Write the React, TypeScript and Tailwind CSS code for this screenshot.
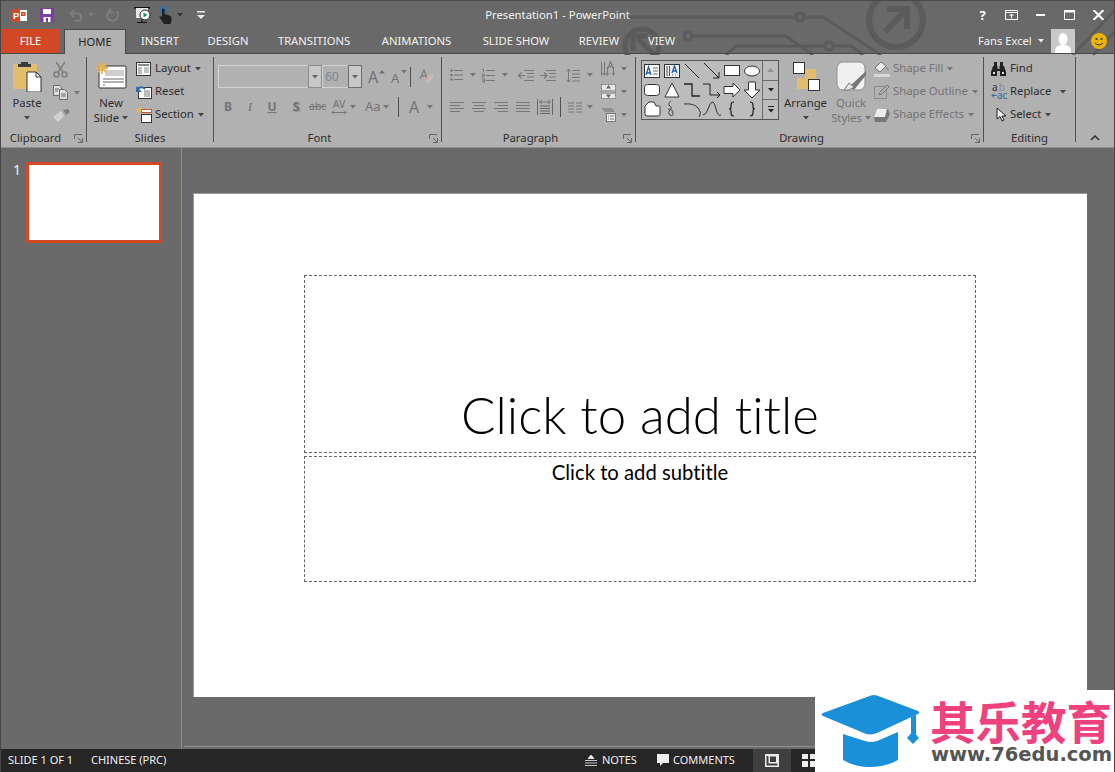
import React from "react";

const Caret = ({className = "text-[#444]"}: {className?: string}) => (
  <svg width="6" height="4" viewBox="0 0 6 4" className={`shrink-0 ${className}`}>
    <path d="M0 0h6L3 3.500z" fill="currentColor" />
  </svg>
);

const Launcher = () => (
  <svg width="9" height="9" viewBox="0 0 9 9" className="absolute right-[3px] bottom-[-1px] text-[#666]">
    <path d="M.5 5V.5H8M8.500 8.500H4M8.500 8.500V4M8 8 4 4" fill="none" stroke="currentColor" />
  </svg>
);

const Group = ({label, className, launcher, children}: {label: string; className: string; launcher?: boolean; children: React.ReactNode}) => (
  <div className={`relative flex flex-col border-r border-[#4f4f4f] ${className}`}>
    <div className="flex h-[77px]">{children}</div>
    <div className={`h-[9px] leading-[9px] text-center text-[#2e2e2e] ${launcher ? "pr-[16px]" : ""}`}>{label}</div>
    {launcher && <Launcher />}
  </div>
);

const BigButton = ({className, icon, lines, caret, dim}: {className: string; icon: React.ReactNode; lines: string[]; caret?: boolean; dim?: boolean}) => (
  <div className={`flex flex-col items-center shrink-0 ${dim ? "text-[#747474]" : "text-[#2e2e2e]"} ${className}`}>
    <div className="h-[38px] flex items-center justify-center">{icon}</div>
    {lines.map((l, i) => (
      <div key={l} className="h-[15px] leading-[15px] flex items-center gap-[3px] whitespace-nowrap">
        {l}
        {caret && i === lines.length - 1 && <Caret className={dim ? "text-[#747474]" : "text-[#444]"} />}
      </div>
    ))}
    {lines.length === 1 && (
      <div className="h-[15px] flex items-center">
        <Caret />
      </div>
    )}
  </div>
);

const SmallRow = ({icon, label, caret, dim, iconBox = "w-[19px]", caretGap = "ml-[4px]"}: {icon: React.ReactNode; label: string; caret?: boolean; dim?: boolean; iconBox?: string; caretGap?: string}) => (
  <div className={`h-[23px] flex items-center whitespace-nowrap ${dim ? "text-[#747474]" : "text-[#2e2e2e]"}`}>
    <div className={`shrink-0 flex items-center justify-start ${iconBox}`}>{icon}</div>
    {label}
    {caret && <div className={caretGap}><Caret className={dim ? "text-[#747474]" : "text-[#444]"} /></div>}
  </div>
);

// ---- title bar art
const CircuitArt = () => (
  <svg width="1115" height="54" viewBox="0 0 1115 54" className="absolute inset-0 text-[#5b5b5b]">
    <g fill="none" stroke="currentColor" strokeWidth="3">
      <path d="M620 16h175M803 16h19l58 38" />
      <circle cx="799" cy="16" r="4" />
      <path d="M691 35h94l27 19" />
      <circle cx="687" cy="35" r="4" />
      <path d="M725 54l10-9h89M832 45h18l12 9" />
      <circle cx="828" cy="45" r="4" />
      <path d="M1072 54l42-45M1092 54l22-24" />
    </g>
    <g fill="none" stroke="currentColor">
      <circle cx="895" cy="19" r="27" strokeWidth="6" />
      <path d="M884 31l20-21M886 8h20v20" strokeWidth="6" />
      <circle cx="641" cy="45" r="17" strokeWidth="5" />
      <path d="M653 54l-16-16M632 50V35h15" strokeWidth="5" />
    </g>
  </svg>
);

const PowerPointLogo = () => (
  <svg width="16" height="15" viewBox="0 0 16 15">
    <path d="M0 2 9 0v15L0 13z" fill="#d24726" />
    <rect x="9" y="2" width="7" height="11" fill="#fff" />
    <path d="M10 4h4.500v4h-4.500z" fill="#d24726" />
    <path d="M11.500 5.500h1.500v1h-1.500zM10 9.500h4.500v1h-4.500z" fill="#fff" />
    <text x="2" y="11" fontSize="9.500" fontWeight="700" fill="#fff" fontFamily="Liberation Sans">P</text>
  </svg>
);

const SaveIcon = () => (
  <svg width="14" height="14" viewBox="0 0 14 14">
    <rect width="14" height="14" fill="#7b3fa0" />
    <rect x="3" y="1" width="8" height="5" fill="#fff" />
    <rect x="3.500" y="9" width="7" height="5" fill="#fff" />
    <rect x="6" y="10" width="2" height="4" fill="#7b3fa0" />
  </svg>
);

const UndoIcon = () => (
  <svg width="14" height="13" viewBox="0 0 14 13" fill="none" stroke="#7d7d7d" strokeWidth="2">
    <path d="M5 1 1.500 4.500 5 8M2 4.500h7a3.800 3.800 0 0 1 0 7.500H6" />
  </svg>
);

const RedoIcon = () => (
  <svg width="14" height="14" viewBox="0 0 14 14" fill="none" stroke="#7d7d7d" strokeWidth="2">
    <path d="M4 2.500a5.500 5.500 0 1 0 6.500 1M4 .5v4h4" />
  </svg>
);

const PresentIcon = () => (
  <svg width="17" height="18" viewBox="0 0 17 18">
    <path d="M0 1h16v1.500H0zM3 16h10v1H3zM7.500 13h1v3h-1z" fill="#111" />
    <rect x="2" y="2" width="12" height="10" fill="#e8e8e8" />
    <circle cx="11" cy="9" r="5" fill="#fff" stroke="#222" />
    <path d="M9.500 6.500 13.500 9l-4 2.500z" fill="#1d8a6d" />
  </svg>
);

const TouchIcon = () => (
  <svg width="15" height="18" viewBox="0 0 15 18">
    <circle cx="5" cy="4" r="4" fill="#3c6fa8" />
    <path d="M4 3.500a1.300 1.300 0 0 1 2.500 0V8l5 1.500q2 .8 2 2.500v3l-1 3H6L1.500 11.500q-.5-1.500 1-1.500L4 11z" fill="#222" />
  </svg>
);

const CustomizeIcon = () => (
  <svg width="8" height="8" viewBox="0 0 8 8" fill="#eee">
    <rect x="0" y="0" width="8" height="1.500" />
    <path d="M0 4h8L4 8z" />
  </svg>
);

// ---- clipboard / slides
const PasteIcon = () => (
  <svg width="30" height="31" viewBox="0 0 30 31">
    <rect x="1" y="3" width="24" height="25" rx="2" fill="#e3bd6e" />
    <path d="M9 3V1h7v2h3v3H6V3z" fill="#3b3b3b" />
    <path d="M15 11h9l5 5v15H15z" fill="#fff" stroke="#333" />
    <path d="M24 11v5h5" fill="none" stroke="#333" />
  </svg>
);

const CutIcon = () => (
  <svg width="15" height="16" viewBox="0 0 15 16" fill="none" stroke="#7d7d7d" strokeWidth="1.500">
    <circle cx="3.500" cy="12.500" r="2.500" />
    <circle cx="11.500" cy="12.500" r="2.500" />
    <path d="M10 10 3 0M5 10l7-10" />
  </svg>
);

const CopyIcon = () => (
  <svg width="15" height="15" viewBox="0 0 15 15" fill="#ddd" stroke="#6b6b6b">
    <path d="M.5.500h6l2 2v8H.5z" />
    <path d="M6.500 4.500h5l3 3v7h-8z" />
    <path d="M2 4h4M2 6h3M8 9h5M8 11h5" fill="none" />
  </svg>
);

const PainterIcon = () => (
  <svg width="17" height="13" viewBox="0 0 17 13">
    <path d="M0 8 8 2l3 5-6 6z" fill="#d2d2d2" />
    <path d="M10 1l5-1 2 3-4 3z" fill="#7d7d7d" />
  </svg>
);

const NewSlideIcon = () => (
  <svg width="31" height="29" viewBox="0 0 31 29">
    <rect x="3" y="4" width="27" height="22" rx="1" fill="#fff" stroke="#333" />
    <rect x="9" y="8" width="19" height="6" fill="#cfcfcf" />
    <path d="M7 17h21M7 20h21M7 23h2" stroke="#666" />
    <path d="M6 0v12M0 6h12M2 2l8 8M10 2l-8 8" stroke="#e7b455" strokeWidth="1.800" />
    <circle cx="6" cy="6" r="3" fill="#e7b455" />
  </svg>
);

const LayoutIcon = () => (
  <svg width="15" height="14" viewBox="0 0 15 14">
    <rect x=".5" y=".5" width="14" height="13" fill="#fff" stroke="#333" />
    <rect x="2" y="2" width="11" height="2" fill="#888" />
    <rect x="2" y="5" width="4" height="7" fill="#bbb" />
    <path d="M8 6h5M8 8h5M8 10h5" stroke="#888" />
  </svg>
);

const ResetIcon = () => (
  <svg width="16" height="14" viewBox="0 0 16 14">
    <rect x="2.500" y="2.500" width="13" height="11" fill="#fff" stroke="#333" />
    <rect x="8" y="5" width="6" height="7" fill="#bbb" />
    <path d="M1 5q4-5 8-1" fill="none" stroke="#2f6ca8" strokeWidth="2" />
    <path d="M0 1v6h6z" fill="#2f6ca8" />
  </svg>
);

const SectionIcon = () => (
  <svg width="16" height="16" viewBox="0 0 16 16">
    <rect x="5.500" y="7.500" width="10" height="8" fill="#fff" stroke="#333" />
    <rect x="5.500" y="2.500" width="10" height="3" fill="#fff" stroke="#c8552c" />
    <path d="M3 0v6M0 3h6M1 1l4 4M5 1 1 5" stroke="#e7b455" strokeWidth="1.200" />
  </svg>
);

// ---- font group
const GrowIcon = ({up}: {up?: boolean}) => (
  <div className="relative w-[14px] h-[16px] text-[#747474]">
    <span className={`absolute left-0 bottom-0 leading-none ${up ? "text-[16px]" : "text-[13px]"}`}>A</span>
    <svg width="6" height="4" viewBox="0 0 6 4" className={`absolute top-[1px] ${up ? "right-[-3px]" : "right-[-2px]"}`}>
      <path d={up ? "M0 3.500h6L3 0z" : "M0 0h6L3 3.500z"} fill="currentColor" />
    </svg>
  </div>
);

const EraserIcon = () => (
  <svg width="15" height="16" viewBox="0 0 15 16">
    <path d="M7 12 13 5l2 2-5 7H7z" fill="#c0c0c0" />
    <path d="M1 10 5 1l3 8M2.500 7h4" fill="none" stroke="#808080" strokeWidth="1.300" />
    <path d="M6 9l4-4 3 2-4 5z" fill="#d8a9a9" opacity=".6" />
  </svg>
);

// ---- paragraph group
const Lines = ({kind}: {kind: "left" | "center" | "right" | "justify"}) => {
  const d = {
    left: "M0 1.500h14M0 4.500h10M0 7.500h14M0 10.500h10",
    center: "M0 1.500h14M2 4.500h10M0 7.500h14M2 10.500h10",
    right: "M0 1.500h14M4 4.500h10M0 7.500h14M4 10.500h10",
    justify: "M0 1.500h14M0 4.500h14M0 7.500h14M0 10.500h14",
  }[kind];
  return (
    <svg width="14" height="12" viewBox="0 0 14 12">
      <path d={d} stroke="#777" fill="none" />
    </svg>
  );
};

const BulletsIcon = () => (
  <svg width="13" height="14" viewBox="0 0 13 14">
    <path d="M4 2.500h9M4 7h9M4 11.500h9" stroke="#777" />
    <circle cx="1.500" cy="2.500" r="1.200" fill="#777" />
    <circle cx="1.500" cy="7" r="1.200" fill="#777" />
    <circle cx="1.500" cy="11.500" r="1.200" fill="#777" />
  </svg>
);

const NumberingIcon = () => (
  <svg width="14" height="15" viewBox="0 0 14 15">
    <path d="M5 2.500h9M5 7.500h9M5 12.500h9" stroke="#777" />
    <path d="M1 1h1.500v3M1 6h2.500v1.500H1V9h2.500M1 11h2.500v3H1M1.500 12.500h2" fill="none" stroke="#777" strokeWidth=".9" />
  </svg>
);

const IndentIcon = ({out}: {out?: boolean}) => (
  <svg width="16" height="11" viewBox="0 0 16 11">
    <path d="M6 .5h10M9 3.500h7M9 7h7M6 10.500h10" stroke="#777" />
    {out ? <path d="M0 5.500h7M3.500 2.500l-3 3 3 3" fill="none" stroke="#777" strokeWidth="1.200" /> : <path d="M0 5.500h7M4 2.500l3 3-3 3" fill="none" stroke="#777" strokeWidth="1.200" />}
  </svg>
);

const LineSpacingIcon = () => (
  <svg width="14" height="15" viewBox="0 0 14 15">
    <path d="M6 2.500h8M6 6h8M6 9.500h8M6 13h8" stroke="#777" />
    <path d="M2.500 1v13M.5 3.500l2-2.500 2 2.500M.5 11.500l2 2.500 2-2.500" fill="none" stroke="#777" />
  </svg>
);

const DistributeIcon = () => (
  <svg width="16" height="16" viewBox="0 0 16 16">
    <path d="M.5 0v16M15.500 0v16M3 7h10M3 9.500h10M3 12h10M3 14.500h10" stroke="#666" />
    <path d="M2.500 3h11M5 1 2.500 3 5 5M11 1l2.500 2L11 5" fill="none" stroke="#777" />
  </svg>
);

const ColumnsIcon = () => (
  <svg width="14" height="11" viewBox="0 0 14 11">
    <path d="M0 1h6M8 1h6M0 4h6M8 4h6M0 7h6M8 7h6M0 10h6M8 10h6" stroke="#777" />
  </svg>
);

const TextDirIcon = () => (
  <svg width="15" height="16" viewBox="0 0 15 16" fill="none" stroke="#777">
    <path d="M.5 1v13M3.500 1v13M6.500 6v8M12.500 6v8M-.5 12l1 2.500 1-2.500M2.500 12l1 2.500 1-2.500M5.500 12l1 2.500 1-2.500M11.500 12l1 2.500 1-2.500" />
    <path d="M7 7.500 9.500.5 12 7.500M8 5.500h3" strokeWidth="1.100" />
  </svg>
);

const AlignTextIcon = () => (
  <svg width="15" height="15" viewBox="0 0 15 15">
    <rect x=".5" y=".5" width="14" height="14" fill="#e8e8e8" stroke="#777" strokeDasharray="2 1" />
    <path d="M1 7h13M1 9h13" stroke="#666" />
    <path d="M7.500 1 5 4.500h5zM7.500 14 5 10.500h5z" fill="#666" />
  </svg>
);

const SmartArtIcon = () => (
  <svg width="15" height="15" viewBox="0 0 15 15">
    <path d="M0 1h11l3 4H4z" fill="#8f8f8f" />
    <rect x="5.500" y="6.500" width="9" height="8" fill="#eee" stroke="#777" />
    <path d="M7 9h1M9 9h4M7 12h1M9 12h4" stroke="#777" />
  </svg>
);

// ---- drawing group
const S = ({children}: {children: React.ReactNode}) => (
  <svg width="18" height="18" viewBox="0 0 18 18" fill="none" stroke="#222" strokeWidth="1">
    {children}
  </svg>
);

const shapes: React.ReactNode[] = [
  <S><rect x="1.500" y="2.500" width="15" height="13" fill="#fff" stroke="#333" /><path d="M3 13l2.500-8L8 13M3.800 11h3.500" stroke="#1e5fa8" strokeWidth="1.300" /><path d="M10 6h5M10 9h5M10 12h5" stroke="#666" /></S>,
  <S><rect x="1.500" y="2.500" width="15" height="13" fill="#eee" stroke="#333" /><path d="M4 4v10M6.500 4v10" stroke="#555" /><path d="M9 11l2.500-7L14 11M10 9h3" stroke="#1e5fa8" strokeWidth="1.300" /><path d="M9 13h1M12 13h1" stroke="#666" /></S>,
  <S><path d="M2 2l14 14" /></S>,
  <S><path d="M1 1l15 15M16 10v6h-6" /></S>,
  <S><rect x="1.500" y="3.500" width="15" height="10" fill="#fff" stroke="#333" /></S>,
  <S><ellipse cx="9" cy="9" rx="7.500" ry="5" fill="#fff" stroke="#333" /></S>,
  <S><rect x="1.500" y="3.500" width="15" height="11" rx="3" fill="#fff" stroke="#333" /></S>,
  <S><path d="M9 2l7 14H2z" fill="#fff" stroke="#333" /></S>,
  <S><path d="M1 3h8v12h8" strokeWidth="1.300" /></S>,
  <S><path d="M0 3h7v11h10M14 11l3 3-3 3" /></S>,
  <S><path d="M1 5.500h9V2l7 7-7 7v-3.500H1z" fill="#fff" stroke="#333" /></S>,
  <S><path d="M5.500 1h7v8H17l-8 8-8-8h4.500z" fill="#fff" stroke="#333" /></S>,
  <S><path d="M2 6l4-4h5l2 4h3q1 0 1 1v7q0 2-2 2H4q-2 0-2-2z" fill="#fff" stroke="#333" /></S>,
  <S><path d="M8 1Q4 4 7 6t0 4q-3 3 0 5t3-2-5-4" stroke="#444" /></S>,
  <S><path d="M1 4q10-1 14 4t1 9" stroke="#333" /></S>,
  <S><path d="M0 15q3 0 5-6t4-7 4 7 5 6" stroke="#333" /></S>,
  <S><path d="M11 2Q8 2 8 5v2q0 2-2 2 2 0 2 2v2q0 3 3 3" strokeWidth="1.200" /></S>,
  <S><path d="M7 2q3 0 3 3v2q0 2 2 2-2 0-2 2v2q0 3-3 3" strokeWidth="1.200" /></S>,
];

const ArrangeIcon = () => (
  <svg width="28" height="31" viewBox="0 0 28 31">
    <rect x="13" y="8" width="11" height="14" fill="#e3bd6e" />
    <rect x="5" y="17" width="11" height="11" fill="#e3bd6e" />
    <rect x="1.500" y="1.500" width="11" height="11" fill="#fff" stroke="#333" />
    <rect x="16.500" y="18.500" width="11" height="11" fill="#fff" stroke="#333" />
  </svg>
);

const QuickStylesIcon = () => (
  <svg width="30" height="30" viewBox="0 0 30 30">
    <rect x="1" y="1" width="28" height="28" rx="6" fill="#f0f0f0" stroke="#909090" />
    <path d="M30 10 13 26l5 3 12-15z" fill="#777" />
    <path d="M13 22l5 4-5 3h-5z" fill="#e6e6e6" stroke="#777" />
  </svg>
);

const ShapeFillIcon = () => (
  <svg width="17" height="16" viewBox="0 0 17 16">
    <path d="M7 1 1 7l5 4 6-6z" fill="#ececec" stroke="#777" />
    <path d="M12 6q3 1 3 3.500-3-.5-3-3.500" fill="#8d8d8d" />
    <rect y="13" width="16" height="3" fill="#d7d7d7" />
  </svg>
);

const ShapeOutlineIcon = () => (
  <svg width="16" height="15" viewBox="0 0 16 15" fill="none">
    <rect x=".5" y="2.500" width="12" height="12" stroke="#8d8d8d" />
    <path d="M5 11l1-3 7-7 2 2-7 7z" fill="#b1b1b1" stroke="#777" />
  </svg>
);

const ShapeEffectsIcon = () => (
  <svg width="16" height="14" viewBox="0 0 16 14">
    <path d="M3 1h11l2 5-4 8H1l-1-5z" fill="#777" />
    <path d="M3 1h10l-2 8H0z" fill="#ececec" />
  </svg>
);

// ---- editing group
const FindIcon = () => (
  <svg width="15" height="14" viewBox="0 0 15 14" fill="#222">
    <path d="M3 0h3v4H3zM9 0h3v4H9zM2 4h4.500v3h2V4H13l2 6v4H9V9H6v5H0v-4z" />
    <rect x="2" y="10" width="2" height="2" fill="#ddd" />
    <rect x="11" y="10" width="2" height="2" fill="#ddd" />
  </svg>
);

const ReplaceIcon = () => (
  <div className="w-[16px] flex flex-col text-[10px]">
    <div className="h-[7px] flex leading-[7px] pl-px">
      <span className="text-[#333]">a</span>
      <span className="ml-px text-[#8a8a8a]">b</span>
    </div>
    <div className="h-[8px] flex items-center leading-[8px]">
      <svg width="6" height="5" viewBox="0 0 6 5" className="shrink-0">
        <path d="M6 2.500H1M3 .5l-2 2 2 2" fill="none" stroke="#2f6ca8" />
      </svg>
      <span className="text-[#2f6ca8]">ac</span>
    </div>
  </div>
);

const SelectIcon = () => (
  <svg width="11" height="15" viewBox="0 0 11 15">
    <path d="M1 1v11l3-2.500L6 14l2-1-2-4h4z" fill="#eee" stroke="#222" />
  </svg>
);

// ---- status
const NotesIcon = () => (
  <svg width="12" height="12" viewBox="0 0 12 12">
    <path d="M3 3.500 6 0l3 3.500zM0 5.500h12M0 8h12M0 10.500h12" fill="#eee" stroke="#eee" strokeWidth=".8" />
  </svg>
);

const CommentIcon = () => (
  <svg width="12" height="13" viewBox="0 0 12 13">
    <path d="M0 0h12v9H6l-3 3V9H0z" fill="#eee" />
  </svg>
);

const tabs = [
  {label: "INSERT", w: "w-[38px]"},
  {label: "DESIGN", w: "w-[40px]"},
  {label: "TRANSITIONS", w: "w-[74px]"},
  {label: "ANIMATIONS", w: "w-[73px]"},
  {label: "SLIDE SHOW", w: "w-[68px]"},
  {label: "REVIEW", w: "w-[40px]"},
  {label: "VIEW", w: "w-[27px]"},
];

export default function App() {
  return (
    <div className="relative w-[1115px] h-[772px] overflow-hidden flex flex-col bg-[#6a6a6a] border-x border-[#474747] font-['Noto_Sans',sans-serif] text-[11.3px]">
      {/* title bar + tabs */}
      <div className="relative h-[54px] shrink-0 bg-[#696969] text-[#f2f2f2] border-t border-[#4a4a4a]">
        <CircuitArt />
        <div className="relative grid grid-cols-[1fr_auto_1fr] items-center h-[28px]">
          <div className="flex items-center pl-[10px]">
            <PowerPointLogo />
            <div className="ml-[13px]"><SaveIcon /></div>
            <div className="ml-[15px]"><UndoIcon /></div>
            <div className="ml-[5px]"><Caret className="text-[#7d7d7d]" /></div>
            <div className="ml-[12px]"><RedoIcon /></div>
            <div className="ml-[14px]"><PresentIcon /></div>
            <div className="ml-[7px]"><TouchIcon /></div>
            <div className="ml-[4px]"><Caret className="text-[#333]" /></div>
            <div className="ml-[14px]"><CustomizeIcon /></div>
          </div>
          <div className="whitespace-nowrap text-[11.3px]">Presentation1 - PowerPoint</div>
          <div className="flex justify-end items-center text-white pr-[1px]">
            <div className="w-[29px] flex justify-center font-bold text-[13px] leading-none">?</div>
            <div className="w-[29px] flex justify-center">
              <svg width="13" height="10" viewBox="0 0 13 10" fill="none" stroke="#fff"><path d="M.5.5h12v9H.5zM.5 2.500h12M6.500 8.500V4M4.500 6l2-2 2 2" /></svg>
            </div>
            <div className="w-[29px] flex justify-center">
              <svg width="9" height="2" viewBox="0 0 9 2"><rect width="9" height="2" fill="#fff" /></svg>
            </div>
            <div className="w-[29px] flex justify-center">
              <svg width="11" height="10" viewBox="0 0 11 10" fill="none" stroke="#fff"><path d="M.5.5h10v9H.5z" /><path d="M0 1.500h11" strokeWidth="2" /></svg>
            </div>
            <div className="w-[29px] flex justify-center">
              <svg width="11" height="10" viewBox="0 0 11 10" stroke="#fff" strokeWidth="2"><path d="M.5 0l10 10M10.500 0l-10 10" /></svg>
            </div>
          </div>
        </div>
        <div className="relative flex items-stretch h-[25px] border-b border-[#4a4a4a] text-[11.2px]">
          <div className="w-[59px] bg-[#d24726] text-white flex items-center justify-center">FILE</div>
          <div className="w-[62px] ml-[4px] -mb-px bg-[#b1b1b1] text-[#262626] border-x border-t border-[#4a4a4a] flex items-center justify-center">HOME</div>
          <div className="flex items-center gap-[29px] ml-[15px]">
            {tabs.map((t) => (
              <div key={t.label} className={`${t.w} flex justify-center whitespace-nowrap`}>{t.label}</div>
            ))}
          </div>
          <div className="ml-auto flex items-center pr-[7px]">
            <span className="w-[54px] whitespace-nowrap">Fans Excel</span>
            <div className="ml-[6px]"><Caret className="text-[#eee]" /></div>
            <div className="ml-[7px] w-[24px] h-[24px] bg-[#c9c9c9] flex items-end justify-center">
              <svg width="16" height="20" viewBox="0 0 16 20" fill="#fff"><ellipse cx="8" cy="6" rx="4.500" ry="6" /><path d="M0 20v-3q0-3 5-5h6q5 2 5 5v3z" /></svg>
            </div>
            <div className="ml-[16px]">
              <svg width="16" height="16" viewBox="0 0 16 16"><circle cx="8" cy="8" r="8" fill="#eab308" /><circle cx="5.500" cy="6" r="1.100" fill="#333" /><circle cx="10.500" cy="6" r="1.100" fill="#333" /><path d="M4 10q4 4 8 0" fill="none" stroke="#333" /></svg>
            </div>
          </div>
        </div>
      </div>

      {/* ribbon */}
      <div className="h-[94px] shrink-0 flex pt-[3px] pb-[5px] bg-[#b1b1b1] border-b border-[#8c8c8c]">
        <Group label="Clipboard" className="w-[86px]" launcher>
          <BigButton className="w-[52px]" icon={<PasteIcon />} lines={["Paste"]} />
          <div className="flex flex-col pt-[1px]">
            <div className="h-[23px] flex items-center"><CutIcon /></div>
            <div className="h-[23px] flex items-center gap-[6px]"><CopyIcon /><Caret className="text-[#777]" /></div>
            <div className="h-[23px] flex items-center"><PainterIcon /></div>
          </div>
        </Group>

        <Group label="Slides" className="w-[127px]">
          <BigButton className="w-[48px]" icon={<NewSlideIcon />} lines={["New", "Slide"]} caret />
          <div className="flex flex-col ml-[1px]">
            <SmallRow icon={<LayoutIcon />} label="Layout" caret />
            <SmallRow icon={<ResetIcon />} label="Reset" />
            <SmallRow icon={<SectionIcon />} label="Section" caret />
          </div>
        </Group>

        <Group label="Font" className="w-[228px]" launcher>
          <div className="flex flex-col pt-[8px] pl-[4px] text-[#747474]">
            <div className="h-[23px] flex items-center">
              <div className="w-[104px] h-full flex">
                <div className="flex-1 border-y border-l border-[#d2d2d2]" />
                <div className="w-[14px] bg-[#c8c8c8] border border-[#8c8c8c] flex items-center justify-center"><Caret className="text-[#666]" /></div>
              </div>
              <div className="w-[40px] h-full flex">
                <div className="flex-1 border-y border-l border-[#d2d2d2] pl-[2px] leading-[21px] text-[#7a8794] text-[12px]">60</div>
                <div className="w-[14px] bg-[#c8c8c8] border border-[#6e6e6e] flex items-center justify-center"><Caret className="text-[#666]" /></div>
              </div>
              <div className="ml-[6px]"><GrowIcon up /></div>
              <div className="ml-[9px]"><GrowIcon /></div>
              <div className="ml-[5px] w-px h-[20px] bg-[#4f4f4f]" />
              <div className="ml-[8px]"><EraserIcon /></div>
            </div>
            <div className="h-[22px] mt-[8px] flex items-center text-[12px] font-bold">
              <span className="ml-[4px] w-[12px] text-center">B</span>
              <span className="ml-[10px] w-[12px] text-center font-normal italic font-['Liberation_Serif',serif] text-[13px]">I</span>
              <span className="ml-[10px] w-[12px] text-center underline">U</span>
              <span className="ml-[11px] w-[14px] text-center text-[13px] [text-shadow:1px_1px_1px_#8a8a8a]">S</span>
              <span className="ml-[6px] w-[16px] text-center font-normal line-through text-[10.5px]">abc</span>
              <div className="ml-[6px] w-[16px] flex flex-col items-center font-normal text-[10.5px] leading-[11px]">
                AV
                <svg width="16" height="5" viewBox="0 0 16 5" fill="none" stroke="currentColor"><path d="M1 2.500h14M3 .5l-2 2 2 2M13 .5l2 2-2 2" /></svg>
              </div>
              <div className="ml-[3px]"><Caret className="text-[#747474]" /></div>
              <span className="ml-[9px] w-[15px] text-center font-normal text-[13px]">Aa</span>
              <div className="ml-[3px]"><Caret className="text-[#747474]" /></div>
              <div className="ml-[9px] w-px h-[20px] bg-[#4f4f4f]" />
              <span className="ml-[8px] w-[14px] text-center font-normal text-[16px]">A</span>
              <div className="ml-[6px]"><Caret className="text-[#747474]" /></div>
            </div>
          </div>
        </Group>

        <Group label="Paragraph" className="w-[194px]" launcher>
          <div className="w-[159px] flex flex-col pl-[8px]">
            <div className="h-[22px] mt-[7px] flex items-center">
              <BulletsIcon />
              <div className="ml-[7px]"><Caret className="text-[#747474]" /></div>
              <div className="ml-[5px]"><NumberingIcon /></div>
              <div className="ml-[7px]"><Caret className="text-[#747474]" /></div>
              <div className="ml-[10px]"><IndentIcon out /></div>
              <div className="ml-[6px]"><IndentIcon /></div>
              <div className="ml-[10px]"><LineSpacingIcon /></div>
              <div className="ml-[7px]"><Caret className="text-[#747474]" /></div>
            </div>
            <div className="h-[22px] mt-[10px] flex items-center">
              <Lines kind="left" />
              <div className="ml-[8px]"><Lines kind="center" /></div>
              <div className="ml-[8px]"><Lines kind="right" /></div>
              <div className="ml-[8px]"><Lines kind="justify" /></div>
              <div className="ml-[7px]"><DistributeIcon /></div>
              <div className="ml-[7px] w-px h-[20px] bg-[#4f4f4f]" />
              <div className="ml-[7px]"><ColumnsIcon /></div>
              <div className="ml-[5px]"><Caret className="text-[#747474]" /></div>
            </div>
          </div>
          <div className="flex flex-col">
            <div className="h-[23px] flex items-center gap-[5px]"><TextDirIcon /><Caret className="text-[#747474]" /></div>
            <div className="h-[23px] flex items-center gap-[5px]"><AlignTextIcon /><Caret className="text-[#747474]" /></div>
            <div className="h-[23px] flex items-center gap-[5px]"><SmartArtIcon /><Caret className="text-[#747474]" /></div>
          </div>
        </Group>

        <Group label="Drawing" className="w-[348px]" launcher>
          <div className="ml-[5px] mt-[3px] w-[138px] h-[60px] flex border border-[#555] bg-[#bcbcbc] shrink-0">
            <div className="flex-1 grid grid-cols-6 grid-rows-3 justify-items-center items-center">
              {shapes.map((s, i) => (
                <div key={i} className="flex">{s}</div>
              ))}
            </div>
            <div className="w-[16px] flex flex-col border-l border-[#6a6a6a]">
              <div className="flex-1 flex items-center justify-center border-b border-[#6a6a6a]">
                <svg width="7" height="4" viewBox="0 0 7 4"><path d="M0 4h7L3.500 0z" fill="#929292" /></svg>
              </div>
              <div className="flex-1 flex items-center justify-center border-b border-[#6a6a6a]"><Caret className="text-[#222]" /></div>
              <div className="flex-1 flex flex-col gap-[2px] items-center justify-center">
                <div className="w-[6px] h-px bg-[#222]" />
                <Caret className="text-[#222]" />
              </div>
            </div>
          </div>
          <BigButton className="w-[43px] ml-[5px]" icon={<ArrangeIcon />} lines={["Arrange"]} />
          <BigButton className="w-[38px] ml-[5px]" icon={<QuickStylesIcon />} lines={["Quick", "Styles"]} caret dim />
          <div className="flex flex-col ml-[4px]">
            <SmallRow icon={<ShapeFillIcon />} label="Shape Fill" caret dim />
            <SmallRow icon={<ShapeOutlineIcon />} label="Shape Outline" caret dim />
            <SmallRow icon={<ShapeEffectsIcon />} label="Shape Effects" caret dim />
          </div>
        </Group>

        <Group label="Editing" className="w-[92px]">
          <div className="flex flex-col pl-[7px]">
            <SmallRow icon={<FindIcon />} label="Find" />
            <SmallRow icon={<ReplaceIcon />} label="Replace" caret caretGap="ml-[9px]" />
            <SmallRow icon={<div className="pl-[5px]"><SelectIcon /></div>} label="Select" caret />
          </div>
        </Group>

        <div className="flex-1 flex items-end justify-center pb-[1px]">
          <svg width="10" height="6" viewBox="0 0 10 6" fill="none" stroke="#333" strokeWidth="1.600"><path d="M1 5l4-4 4 4" /></svg>
        </div>
      </div>

      {/* editor */}
      <div className="flex-1 flex min-h-0 bg-[#6a6a6a]">
        <div className="w-[181px] shrink-0 flex pt-[14px] border-r border-[#8f8f8f] text-[#f2f2f2]">
          <span className="w-[25px] pl-[12px] text-[14px] leading-[16px]">1</span>
          <div className="w-[136px] h-[81px] bg-white border-[3px] border-[#d24726]" />
        </div>
        <div className="flex-1 flex flex-col min-w-0">
          <div className="flex-1 pl-[11px] pt-[45px] border-b border-[#8f8f8f] ml-[2px]">
            <div className="-ml-[2px] w-[894px] h-[504px] bg-white border-t border-l border-[#999] flex flex-col items-center pt-[81px] text-black font-['Lato',sans-serif] [font-variant-ligatures:none]">
              <div className="w-[672px] h-[178px] border border-dashed border-[#666] flex items-end justify-center font-light text-[51px] leading-[70px] pb-[2px] -ml-px">
                Click to add title
              </div>
              <div className="w-[672px] h-[126px] mt-[3px] border border-dashed border-[#666] text-center text-[20.3px] leading-[30px] -ml-px">
                Click to add subtitle
              </div>
            </div>
          </div>
          <div className="h-[2px] shrink-0" />
        </div>
      </div>

      {/* status bar */}
      <div className="h-[23px] shrink-0 flex items-center bg-[#262626] text-[#f0f0f0] text-[11px]">
        <span className="ml-[7px] w-[83px] whitespace-nowrap">SLIDE 1 OF 1</span>
        <span className="whitespace-nowrap">CHINESE (PRC)</span>
        <div className="ml-auto flex items-center h-full">
          <NotesIcon />
          <span className="ml-[5px] w-[55px] whitespace-nowrap">NOTES</span>
          <CommentIcon />
          <span className="ml-[4px] w-[80px] whitespace-nowrap">COMMENTS</span>
          <div className="w-[38px] h-full bg-[#3f3f3f] flex items-center justify-center">
            <svg width="14" height="13" viewBox="0 0 14 13" fill="#eee"><path fillRule="evenodd" d="M0 0h14v13H0zM1.500 1.500v10h11v-2H3.500v-7zM5 2.500v5.500h6V2.500z" /></svg>
          </div>
          <div className="ml-[11px] w-[312px]">
            <svg width="14" height="13" viewBox="0 0 14 13" fill="#eee"><path d="M0 0h6v5H0zM8 0h6v5H8zM0 7h6v6H0zM8 7h6v6H8z" /></svg>
          </div>
        </div>
      </div>

      {/* site watermark over the window corner */}
      <div className="absolute left-[814px] top-[690px] w-[300px] h-[82px] bg-white flex items-start">
        <svg width="112" height="82" viewBox="0 0 112 82" className="shrink-0">
          <path d="M56 5.500q3-1.200 6 0L103 21q2.500 1.500 0 3L62 43q-6 2.500-12 .5L8 26q-3-1.500 0-3z" fill="#1a90d9" />
          <path d="M28 44l22 7q6 2 12 0l21-9v28q-12 7-29 7-14 0-26-7z" fill="#1a90d9" />
          <path d="M96 27l5-2v21l-3-1-2 1z" fill="#1a90d9" />
          <path d="M98 41l6 7-6 6-6-6z" fill="#1a90d9" />
        </svg>
        <div className="flex flex-col ml-[3px] mt-[6px]">
          <span className="font-['Noto_Sans_CJK_SC',sans-serif] font-bold text-[45.500px] leading-[48px] text-[#f0417f] whitespace-nowrap">其乐教育</span>
          <span className="font-['DejaVu_Sans',sans-serif] ml-px font-bold text-[19.5px] leading-[22px] text-[#555] whitespace-nowrap">www.76edu.com</span>
        </div>
      </div>
    </div>
  );
}
